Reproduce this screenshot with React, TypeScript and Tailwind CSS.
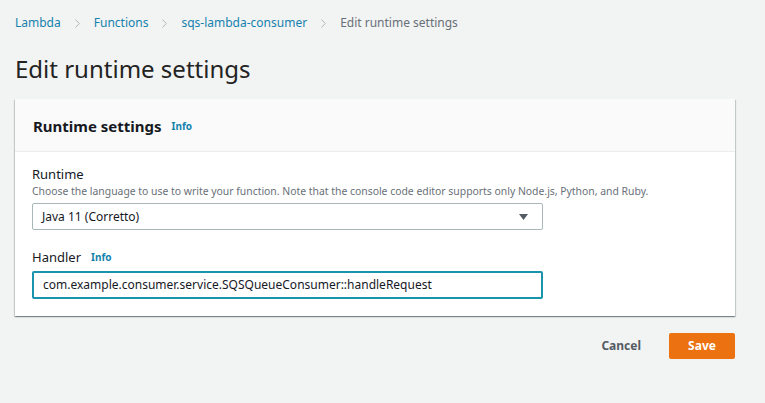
import { ChevronRight } from "lucide-react";

const crumbs = ["Lambda", "Functions", "sqs-lambda-consumer"];

function Info() {
  return <span className="ml-[10px] text-[10px] font-bold text-[#1482ad]">Info</span>;
}

export default function App() {
  return (
    <div className="min-h-[403px] w-[765px] bg-[#f2f3f3] px-[15px] pt-[14px] font-['Noto_Sans',sans-serif] text-[#16191f]">
      {/* Breadcrumbs */}
      <nav className="flex items-center text-[12px] leading-[18px]">
        {crumbs.map((c) => (
          <span key={c} className="flex items-center">
            <span className="text-[#1482ad]">{c}</span>
            <ChevronRight className="mx-[9px] h-[15px] w-[15px] text-[#aab7b8]" strokeWidth={1.5} />
          </span>
        ))}
        <span className="text-[#687078]">Edit runtime settings</span>
      </nav>

      <h1 className="mt-[22px] text-[24px] leading-[30px] text-[#232323]">Edit runtime settings</h1>

      {/* Card */}
      <div className="mt-[15px] w-[720px] bg-white shadow-[0_1px_1px_0_rgba(0,28,36,0.3),1px_1px_1px_0_rgba(0,28,36,0.15),-1px_1px_1px_0_rgba(0,28,36,0.15)]">
        <div className="flex h-[53px] items-center border-b border-[#eaeded] bg-[#fafafa] px-[18px] pt-[2px]">
          <h2 className="text-[15px] font-bold leading-[20px]">Runtime settings</h2>
          <Info />
        </div>
        <div className="px-[17px] pb-[17px] pt-[13px]">
          <div className="text-[13px] leading-[18px]">Runtime</div>
          <div className="mt-[1px] text-[10.4px] leading-[15px] text-[#687078]">
            Choose the language to use to write your function. Note that the console code editor supports only Node.js, Python, and Ruby.
          </div>
          <div className="mt-[4px] flex h-[27px] w-[511px] items-center justify-between rounded-[2px] border border-[#aab7b8] px-[9px] text-[12px]">
            <span>Java 11 (Corretto)</span>
            <svg width="9" height="6" viewBox="0 0 9 6" className="mr-[5px]">
              <path d="M0 0h9L4.5 6z" fill="#545b64" />
            </svg>
          </div>

          <div className="mt-[18px] flex items-center text-[13px] leading-[18px]">
            Handler
            <Info />
          </div>
          <div className="mt-[5px] flex h-[28px] w-[511px] items-center rounded-[2px] border-2 border-[#1a93ad] px-[9px] text-[12px]">
            com.example.consumer.service.SQSQueueConsumer::handleRequest
          </div>
        </div>
      </div>

      {/* Actions */}
      <div className="mt-[17px] flex w-[720px] items-center justify-end">
        <button className="mr-[28px] text-[12px] font-bold text-[#545b64]">Cancel</button>
        <button className="h-[26px] w-[66px] rounded-[2px] bg-[#ec7211] text-[12px] font-bold text-white">Save</button>
      </div>
    </div>
  );
}
